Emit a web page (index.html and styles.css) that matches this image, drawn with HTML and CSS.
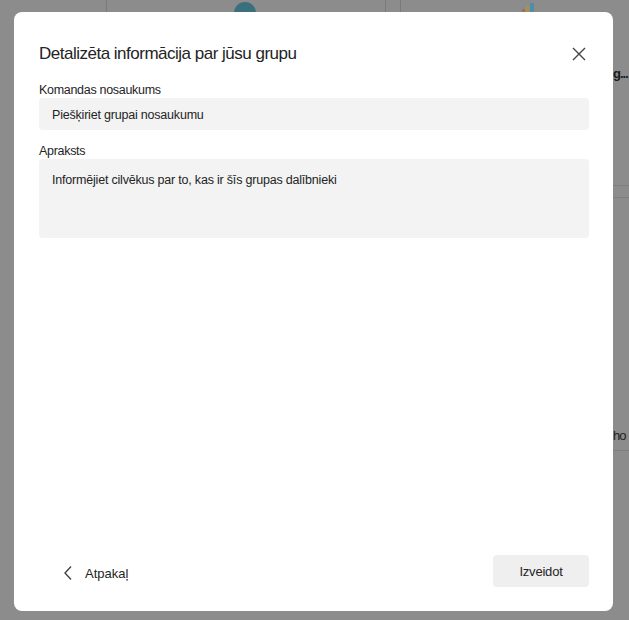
FILE: index.html
```html
<!DOCTYPE html>
<html>

<head>
    <title>Detalizēta informācija par jūsu grupu</title>
    <link rel="stylesheet" href="styles.css">
</head>

<body>
    <div class="backdrop">
        <div class="bg-line bg-line-1"></div>
        <div class="bg-line bg-line-2"></div>
        <div class="bg-line bg-line-3"></div>
        <div class="bg-bag"></div>
        <div class="bg-chart"><span></span><span></span><span></span></div>
        <div class="bg-text bg-text-1">g...</div>
        <div class="bg-text bg-text-2">ho</div>
        <div class="bg-hline bg-hline-1"></div>
        <div class="bg-hline bg-hline-2"></div>
        <div class="bg-hline bg-hline-3"></div>
    </div>

    <div class="dialog">
        <div class="dialog-header">
            <h1>Detalizēta informācija par jūsu grupu</h1>
            <button class="close" aria-label="Aizvērt">
                <svg width="14" height="14" viewBox="0 0 14 14">
                    <path d="M1 1 L13 13 M13 1 L1 13" stroke="#444" stroke-width="1.4" fill="none" />
                </svg>
            </button>
        </div>

        <div class="form-group">
            <label for="team_name">Komandas nosaukums</label>
            <div class="field" id="team_name">Piešķiriet grupai nosaukumu</div>
        </div>

        <div class="form-group">
            <label for="description">Apraksts</label>
            <div class="field field-area" id="description">Informējiet cilvēkus par to, kas ir šīs grupas dalībnieki</div>
        </div>

        <div class="dialog-footer">
            <button class="back">
                <svg width="10" height="16" viewBox="0 0 10 16">
                    <path d="M8 1.5 L2 8 L8 14.5" stroke="#444" stroke-width="1.4" fill="none" />
                </svg>
                <span>Atpakaļ</span>
            </button>
            <button class="create">Izveidot</button>
        </div>
    </div>
</body>

</html>
```

FILE: styles.css
```css
html {
    background: #8c8c8c;
}

body {
    margin: 0;
    width: 629px;
    height: 620px;
    overflow: hidden;
    font-family: "Liberation Sans", Arial, sans-serif;
    background: #8c8c8c;
    position: relative;
}

/* faded page behind the dialog */
.backdrop {
    position: absolute;
    left: 0;
    top: 0;
    width: 629px;
    height: 620px;
    background: rgb(140, 140, 140);
}

.bg-line {
    position: absolute;
    top: 0;
    width: 1px;
    height: 12px;
    background-color: #7a7a7a;
}

.bg-line-1 {
    left: 106px;
}

.bg-line-2 {
    left: 385px;
}

.bg-line-3 {
    left: 400px;
}

.bg-bag {
    position: absolute;
    left: 234px;
    top: 2px;
    width: 22px;
    height: 20px;
    border-radius: 11px 11px 4px 4px;
    background-color: #3a6f7e;
}

.bg-chart {
    position: absolute;
    left: 522px;
    top: 3px;
    display: flex;
    align-items: flex-end;
    gap: 1px;
    height: 10px;
}

.bg-chart span {
    width: 3px;
    background-color: #a36b5a;
    height: 4px;
}

.bg-chart span:nth-child(2) {
    background-color: #a59255;
    height: 7px;
}

.bg-chart span:nth-child(3) {
    width: 4px;
    background-color: #4f8ea5;
    height: 10px;
}

.bg-text {
    position: absolute;
    left: 613px;
    white-space: nowrap;
    color: #1a1a1a;
    font-size: 13px;
    letter-spacing: -1px;
}

.bg-text-1 {
    top: 66px;
    font-weight: bold;
}

.bg-text-2 {
    top: 428px;
    color: #222;
}

.bg-hline {
    position: absolute;
    left: 613px;
    right: 0;
    height: 1px;
    background-color: #7f7f7f;
}

.bg-hline-1 {
    top: 185px;
}

.bg-hline-2 {
    top: 197px;
}

.bg-hline-3 {
    top: 450px;
}

/* dialog */
.dialog {
    position: absolute;
    left: 14px;
    top: 12px;
    width: 599px;
    height: 599px;
    box-sizing: border-box;
    padding: 0 24px 24px 25px;
    background-color: #fff;
    border-radius: 8px;
    display: flex;
    flex-direction: column;
}

.dialog-header {
    display: flex;
    align-items: center;
    justify-content: space-between;
    height: 71px;
    box-sizing: border-box;
    padding-top: 12px;
}

h1 {
    margin: 0;
    font-size: 17px;
    font-weight: normal;
    color: #242424;
    letter-spacing: -0.5px;
}

.close {
    background: none;
    border: none;
    padding: 0;
    margin-right: 3px;
    width: 14px;
    height: 14px;
    display: flex;
}

.form-group {
    margin-bottom: 14px;
}

label {
    display: block;
    font-size: 12.5px;
    color: #242424;
    line-height: 15px;
    margin-bottom: 0;
    letter-spacing: -0.3px;
}

.field {
    background-color: #f3f3f3;
    border-radius: 4px;
    height: 32px;
    box-sizing: border-box;
    padding: 9px 13px;
    font-size: 12.5px;
    line-height: 16px;
    color: #242424;
    letter-spacing: -0.2px;
}

.field-area {
    height: 79px;
    padding-top: 13px;
}

.dialog-footer {
    margin-top: auto;
    display: flex;
    align-items: center;
    justify-content: space-between;
}

.back {
    background: none;
    border: none;
    display: flex;
    align-items: center;
    gap: 12px;
    padding: 0 0 0 24px;
    font-family: inherit;
    font-size: 13px;
    color: #242424;
    margin-top: 4px;
}

.create {
    width: 96px;
    height: 32px;
    background-color: #efefef;
    border: none;
    border-radius: 4px;
    font-family: inherit;
    font-size: 13px;
    color: #242424;
    letter-spacing: -0.2px;
}
```
